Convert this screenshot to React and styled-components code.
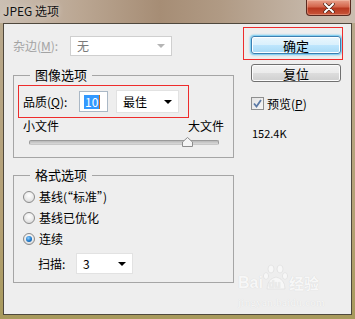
import React from 'react'
import styled, { createGlobalStyle } from 'styled-components'

const GlobalStyle = createGlobalStyle`
  html, body {
    margin: 0;
    padding: 0;
    background: #ffffff;
  }
  body {
    font-family: "Noto Sans CJK SC", "Noto Sans", sans-serif;
    font-size: 12px;
    color: #000000;
  }
  * {
    box-sizing: border-box;
  }
`

const Frame = styled.div`
  position: relative;
  width: 355px;
  height: 319px;
  display: flex;
  flex-direction: column;
  background: linear-gradient(180deg, #b9a98f 0%, #b4a074 70%, #a89a5c 100%);
  overflow: hidden;
`

const TitleBar = styled.div`
  height: 23px;
  flex: 0 0 23px;
  display: flex;
  justify-content: space-between;
  align-items: flex-start;
  padding-left: 3px;
  background: linear-gradient(90deg, #cbbfb3 0%, #bba793 22%, #a68d75 45%, #b09a84 62%, #c3b4a5 85%, #cbbdb0 100%);
`

const Title = styled.span`
  margin-top: 3px;
  font-size: 12px;
  line-height: 16px;
  color: #111111;
  text-shadow: 0 0 6px rgba(255, 255, 255, 0.6);
`

const CloseButton = styled.div`
  width: 45px;
  height: 16px;
  margin-right: 4px;
  display: flex;
  align-items: center;
  justify-content: center;
  border: 1px solid #5a2a20;
  border-top: none;
  border-radius: 0 0 4px 4px;
  background: linear-gradient(180deg, #e8a08a 0%, #d4664c 45%, #b8381f 55%, #c9553a 100%);
  box-shadow: inset 0 0 0 1px rgba(255, 220, 200, 0.35);
`

const Client = styled.div`
  position: relative;
  flex: 1;
  margin: 0 3px 4px 3px;
  display: flex;
  padding: 12px 0 0 9px;
  border: 1px solid #4f483d;
  background: #eeeeee;
`

const LeftCol = styled.div`
  width: 221px;
  display: flex;
  flex-direction: column;
`

const RightCol = styled.div`
  width: 90px;
  margin-left: 17px;
  display: flex;
  flex-direction: column;
`

const Row = styled.div`
  display: flex;
  align-items: center;
  height: ${p => p.$h || 20}px;
  margin-top: ${p => p.$mt || 0}px;
  margin-left: ${p => p.$ml || 0}px;
`

const Label = styled.span`
  width: ${p => p.$w ? `${p.$w}px` : 'auto'};
  flex: 0 0 auto;
  line-height: 14px;
  color: ${p => p.$disabled ? '#a3a3a3' : '#000000'};
  white-space: nowrap;
`

const Select = styled.div`
  width: ${p => p.$w}px;
  height: ${p => p.$h || 21}px;
  margin-left: ${p => p.$ml || 0}px;
  display: flex;
  align-items: center;
  justify-content: space-between;
  padding: 0 6px 0 6px;
  background: #ffffff;
  border: 1px solid ${p => p.$disabled ? '#cfcfcf' : '#e2e2e2'};
  color: ${p => p.$disabled ? '#7a7a7a' : '#000000'};
  line-height: 14px;
`

const Arrow = styled.span`
  width: 0;
  height: 0;
  border-left: 4px solid transparent;
  border-right: 4px solid transparent;
  border-top: 4px solid ${p => p.$disabled ? '#b5b5b5' : '#000000'};
`

const TextInput = styled.div`
  width: 29px;
  height: 21px;
  display: flex;
  align-items: center;
  padding-left: 4px;
  background: #ffffff;
  border: 1px solid #aab8c6;
`

const Selected = styled.span`
  background: #3399ff;
  color: #ffffff;
  line-height: 14px;
  padding: 0 1px;
`

const Caret = styled.span`
  width: 1px;
  height: 14px;
  background: #c66a1c;
`

const Group = styled.fieldset`
  margin: ${p => p.$mt}px 0 0 0;
  height: ${p => p.$h}px;
  padding: ${p => p.$pt}px 9px 0 9px;
  border: 1px solid #a5a5a5;
  min-width: 0;
`

const Legend = styled.legend`
  margin-left: 7px;
  padding: 0 5px;
  font-size: 13px;
  line-height: 14px;
  color: #000000;
`

const SizeLabels = styled.div`
  display: flex;
  justify-content: space-between;
  margin-top: 6px;
  line-height: 14px;
`

const Slider = styled.div`
  position: relative;
  height: 10px;
  width: 190px;
  margin: 4px 0 0 6px;
  display: flex;
  align-items: center;
`

const Track = styled.div`
  width: 100%;
  height: 5px;
  border-radius: 2px;
  border: 1px solid #9a9a9a;
  border-bottom-color: #c8c8c8;
  background: linear-gradient(180deg, #b8b8b8 0%, #dadada 100%);
`

const Thumb = styled.svg`
  position: absolute;
  top: 0;
  left: ${p => p.$pos}px;
`

const RadioRow = styled.div`
  display: flex;
  align-items: center;
  height: 21px;
  gap: 4px;
`

const Radio = styled.span`
  width: 12px;
  height: 12px;
  flex: 0 0 12px;
  border-radius: 50%;
  border: 1px solid #8a8a8a;
  background: radial-gradient(circle at 50% 35%, #ffffff 0%, #e9e9e9 55%, #cfcfcf 100%);
  display: flex;
  align-items: center;
  justify-content: center;

  &::after {
    content: '';
    display: ${p => p.$checked ? 'block' : 'none'};
    width: 6px;
    height: 6px;
    border-radius: 50%;
    background: radial-gradient(circle at 40% 35%, #8fd0ff 0%, #1e78c8 55%, #0c4a8a 100%);
  }
`

const Button = styled.div`
  height: 18px;
  margin-top: ${p => p.$mt || 0}px;
  display: flex;
  align-items: center;
  justify-content: center;
  font-size: 13px;
  border-radius: 3px;
  border: 1px solid ${p => p.$primary ? '#3c7fb1' : '#707070'};
  background: ${p => p.$primary
    ? 'linear-gradient(180deg, #eaf6fd 0%, #d9f0fc 50%, #bee6fd 51%, #a7d9f5 100%)'
    : 'linear-gradient(180deg, #f2f2f2 0%, #ebebeb 50%, #dddddd 51%, #cfcfcf 100%)'};
  box-shadow: ${p => p.$primary ? '0 0 2px 1px #62c6f2, inset 0 0 0 1px #ffffff' : 'inset 0 0 0 1px #fcfcfc'};
`

const CheckRow = styled.div`
  display: flex;
  align-items: center;
  height: 13px;
  margin-top: 15px;
  gap: 3px;
`

const CheckBox = styled.span`
  width: 13px;
  height: 13px;
  border: 1px solid #8e8f8f;
  background: linear-gradient(135deg, #e4e4e4 0%, #f6f6f6 100%);
  display: flex;
  align-items: center;
  justify-content: center;
`

const FileSize = styled.div`
  margin-top: 17px;
  line-height: 12px;
  font-size: 11px;
  padding-left: 1px;
`

const Mark = styled.div`
  position: absolute;
  left: ${p => p.$x}px;
  top: ${p => p.$y}px;
  width: ${p => p.$w}px;
  height: ${p => p.$h}px;
  border: 1px solid #ee2c2c;
  pointer-events: none;
`

const Watermark = styled.div`
  position: absolute;
  left: 238px;
  top: 264px;
  display: flex;
  flex-direction: column;
  align-items: flex-start;
  color: #f7f7f7;
  text-shadow: 0 0 1px rgba(0, 0, 0, 0.12);
  pointer-events: none;
`

const WatermarkBrand = styled.div`
  display: flex;
  align-items: flex-end;
  font-family: "Liberation Sans", Arial, sans-serif;
  font-weight: bold;
  font-size: 16px;
  line-height: 16px;
  height: 27px;
`

const WatermarkCn = styled.span`
  font-family: "Noto Sans CJK SC", sans-serif;
  font-size: 15px;
`

const WatermarkUrl = styled.div`
  font-family: "Liberation Serif", serif;
  font-size: 11px;
  line-height: 12px;
  margin-top: 5px;
  letter-spacing: 0.3px;
`

export default function App() {
  return (
    <>
      <GlobalStyle />
      <Frame>
        <TitleBar>
          <Title>JPEG 选项</Title>
          <CloseButton>
            <svg width="12" height="10" viewBox="0 0 12 10">
              <path d="M2 1 L10 9 M10 1 L2 9" stroke="#4a2418" strokeWidth="3.4" strokeLinecap="round" />
              <path d="M2 1 L10 9 M10 1 L2 9" stroke="#ffffff" strokeWidth="2" strokeLinecap="round" />
            </svg>
          </CloseButton>
        </TitleBar>
        <Client>
          <LeftCol>
            <Row $h={20}>
              <Label $w={57} $disabled>杂边(<u>M</u>):</Label>
              <Select $w={102} $h={20} $disabled>
                <span>无</span>
                <Arrow $disabled />
              </Select>
            </Row>

            <Group $mt={12} $h={90} $pt={8}>
              <Legend>图像选项</Legend>
              <Row $h={23}>
                <Label $w={56}>品质(<u>Q</u>):</Label>
                <TextInput>
                  <Selected>10</Selected>
                  <Caret />
                </TextInput>
                <Select $w={63} $h={23} $ml={8}>
                  <span>最佳</span>
                  <Arrow />
                </Select>
              </Row>
              <SizeLabels>
                <span>小文件</span>
                <span>大文件</span>
              </SizeLabels>
              <Slider>
                <Track />
                <Thumb $pos={153} width="11" height="10" viewBox="0 0 11 10">
                  <path d="M0.5 9.5 L0.5 5 L5.5 0.5 L10.5 5 L10.5 9.5 Z" fill="#f4f4f4" stroke="#8c8c8c" />
                </Thumb>
              </Slider>
            </Group>

            <Group $mt={10} $h={115} $pt={4}>
              <Legend>格式选项</Legend>
              <RadioRow>
                <Radio />
                <span>基线(“标准”)</span>
              </RadioRow>
              <RadioRow>
                <Radio />
                <span>基线已优化</span>
              </RadioRow>
              <RadioRow>
                <Radio $checked />
                <span>连续</span>
              </RadioRow>
              <Row $h={21} $mt={4} $ml={15}>
                <Label $w={38}>扫描:</Label>
                <Select $w={57} $h={21}>
                  <span>3</span>
                  <Arrow />
                </Select>
              </Row>
            </Group>
          </LeftCol>

          <RightCol>
            <Button $primary>确定</Button>
            <Button $mt={10}>复位</Button>
            <CheckRow>
              <CheckBox>
                <svg width="9" height="9" viewBox="0 0 9 9">
                  <path d="M1 4.5 L3.5 7.5 L8 1" fill="none" stroke="#5b7aa6" strokeWidth="1.8" />
                </svg>
              </CheckBox>
              <span>预览(<u>P</u>)</span>
            </CheckRow>
            <FileSize>152.4K</FileSize>
          </RightCol>
        </Client>

        <Mark $x={243} $y={27} $w={100} $h={33} />
        <Mark $x={18} $y={85} $w={171} $h={33} />

        <Watermark>
          <WatermarkBrand>
            <span>Bai</span>
            <svg width="26" height="27" viewBox="0 0 26 27">
              <g fill="#f7f7f7" stroke="#dedede" strokeWidth="0.7">
                <ellipse cx="8" cy="5" rx="3" ry="4" />
                <ellipse cx="17" cy="5" rx="3" ry="4" />
                <ellipse cx="3" cy="12" rx="2.6" ry="3.4" />
                <ellipse cx="22" cy="12" rx="2.6" ry="3.4" />
                <path d="M4 25 Q4 15 13 13 Q22 15 22 25 Z" />
              </g>
              <text x="5.5" y="24" fontSize="10" fontWeight="bold" fontFamily="Liberation Sans, sans-serif" fill="#ececec">du</text>
            </svg>
            <WatermarkCn>经验</WatermarkCn>
          </WatermarkBrand>
          <WatermarkUrl>jingyan.baidu.com</WatermarkUrl>
        </Watermark>
      </Frame>
    </>
  )
}
